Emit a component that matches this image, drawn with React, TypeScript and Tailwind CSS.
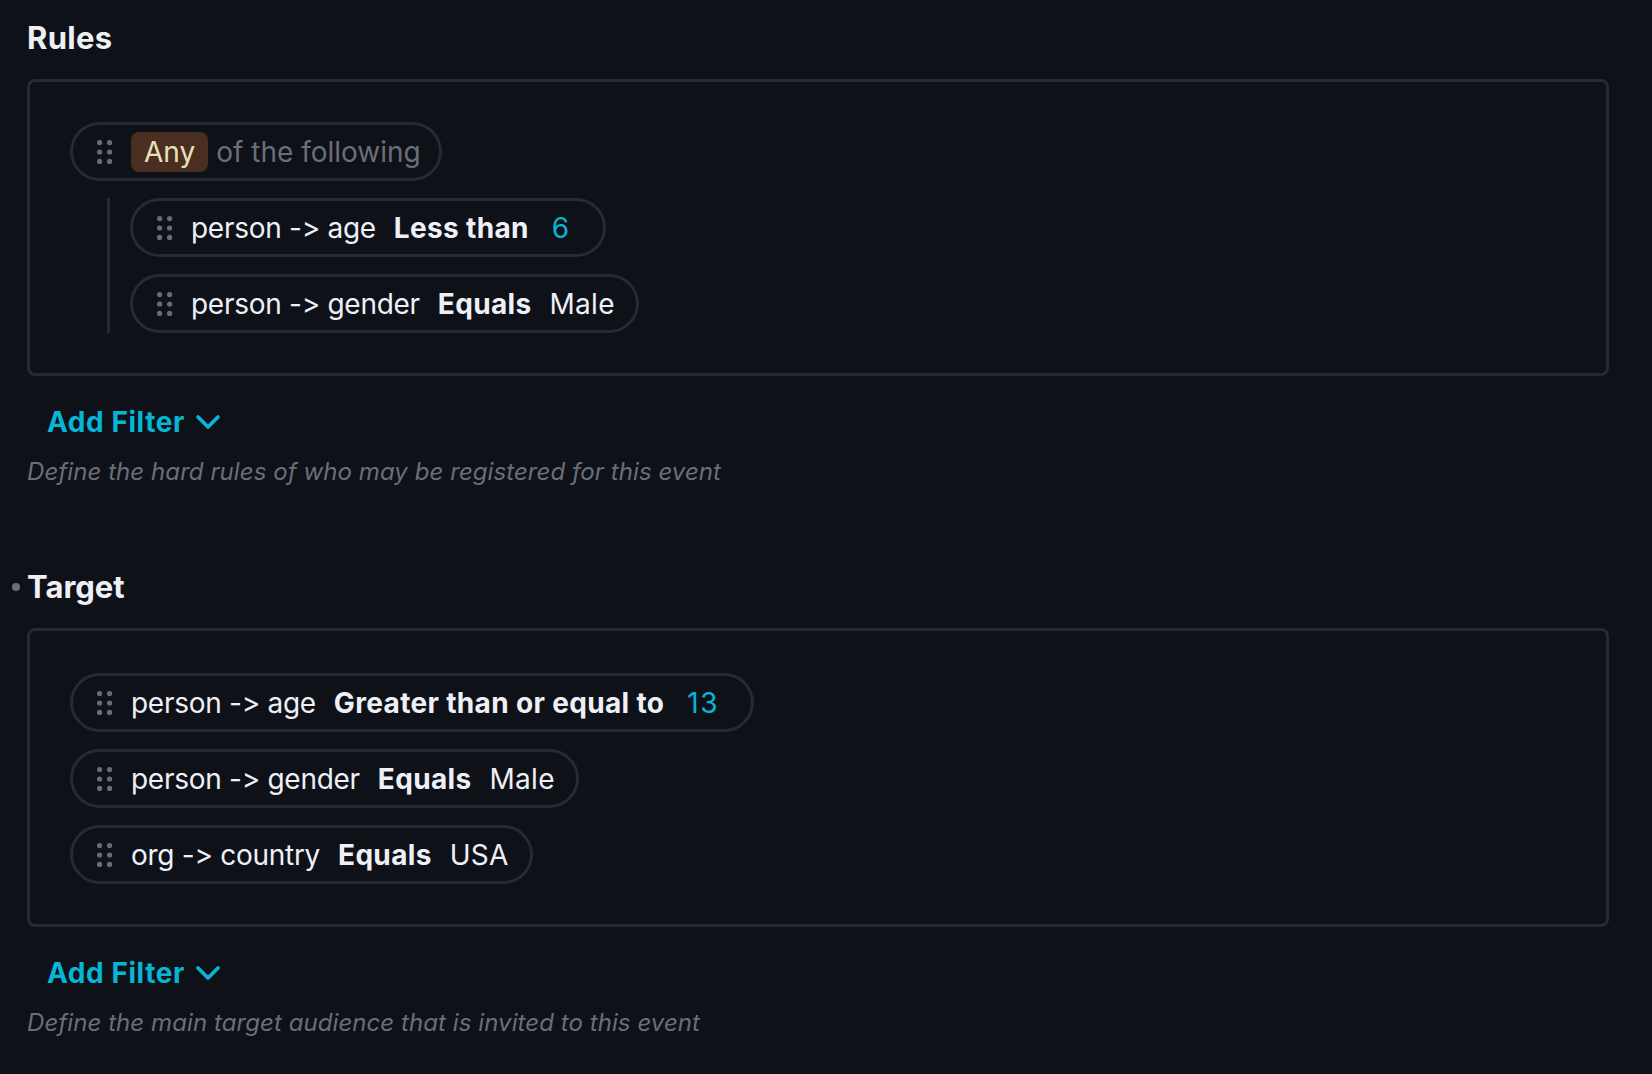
import { ChevronDown } from "lucide-react";

type Rule = { field: string; op: string; value: string; numeric?: boolean };

const rulesChildren: Rule[] = [
  { field: "person -> age", op: "Less than", value: "6", numeric: true },
  { field: "person -> gender", op: "Equals", value: "Male" },
];

const targetRules: Rule[] = [
  { field: "person -> age", op: "Greater than or equal to", value: "13", numeric: true },
  { field: "person -> gender", op: "Equals", value: "Male" },
  { field: "org -> country", op: "Equals", value: "USA" },
];

function DragHandle() {
  return (
    <svg width="16" height="24" viewBox="0 0 16 24" className="shrink-0" fill="#6b6b76">
      <circle cx="2.6" cy="2.6" r="2.6" />
      <circle cx="12.6" cy="2.6" r="2.6" />
      <circle cx="2.6" cy="12" r="2.6" />
      <circle cx="12.6" cy="12" r="2.6" />
      <circle cx="2.6" cy="21.4" r="2.6" />
      <circle cx="12.6" cy="21.4" r="2.6" />
    </svg>
  );
}

function RulePill({ rule }: { rule: Rule }) {
  return (
    <div className="flex h-[59px] w-fit items-center gap-[18px] rounded-full border-[3px] border-[#262a33] pl-6 pr-[17px]">
      <DragHandle />
      <span className="whitespace-pre tracking-[-0.01em]">{rule.field}</span>
      <span className="font-bold tracking-[0.012em]">{rule.op}</span>
      {rule.numeric ? (
        <span className="pl-[5px] pr-[15px] tracking-[0.06em] text-[#06b6d4]">{rule.value}</span>
      ) : (
        <span className="pr-[4px] tracking-[0.01em]">{rule.value}</span>
      )}
    </div>
  );
}

function AddFilter({ text }: { text: string }) {
  return (
    <>
      <button className="mt-[26px] flex h-10 items-center gap-[3px] pl-5 text-[28px] font-bold tracking-[0.02em] text-[#06b6d4]">
        Add Filter
        <ChevronDown size={40} strokeWidth={2.25} />
      </button>
      <p className="mt-[14px] text-[24px] leading-8 tracking-[0.003em] italic text-[#6b6e78]">{text}</p>
    </>
  );
}

export default function App() {
  return (
    <main className="min-h-screen bg-[#0e1118] pl-[27px] pr-[43px] pt-5 font-['Inter',sans-serif] [font-feature-settings:'calt'_0,'liga'_0] text-[#eef0f6]">
      <h2 className="text-[31px] font-bold leading-9 tracking-[0.01em]">Rules</h2>
      <div className="mt-[23px] rounded-lg border-[3px] border-[#262a33] p-10 text-[28px]">
        <div className="flex h-[59px] w-fit items-center rounded-full border-[3px] border-[#262a33] pl-6 pr-[18px]">
          <DragHandle />
          <span className="ml-[18px] flex h-10 items-center rounded-lg bg-[#4a2e21] px-[13px] text-[#e6e2b8]">Any</span>
          <span className="ml-2 text-[#6b6e78]">of the following</span>
        </div>
        <div className="ml-[37px] mt-[17px] flex flex-col gap-[17px] border-l-[3px] border-[#262a33] pl-5">
          {rulesChildren.map((r) => (
            <RulePill key={r.field} rule={r} />
          ))}
        </div>
      </div>
      <AddFilter text="Define the hard rules of who may be registered for this event" />

      <h2 className="mt-[81px] flex items-center text-[31px] font-bold leading-9">
        <span className="-ml-[15px] mr-[7px] h-2 w-2 rounded-full bg-[#6b6e78]" />
        Target
      </h2>
      <div className="mt-[23px] flex flex-col gap-[17px] rounded-lg border-[3px] border-[#262a33] px-10 pb-10 pt-[42px] text-[28px]">
        {targetRules.map((r) => (
          <RulePill key={r.field} rule={r} />
        ))}
      </div>
      <AddFilter text="Define the main target audience that is invited to this event" />
    </main>
  );
}
